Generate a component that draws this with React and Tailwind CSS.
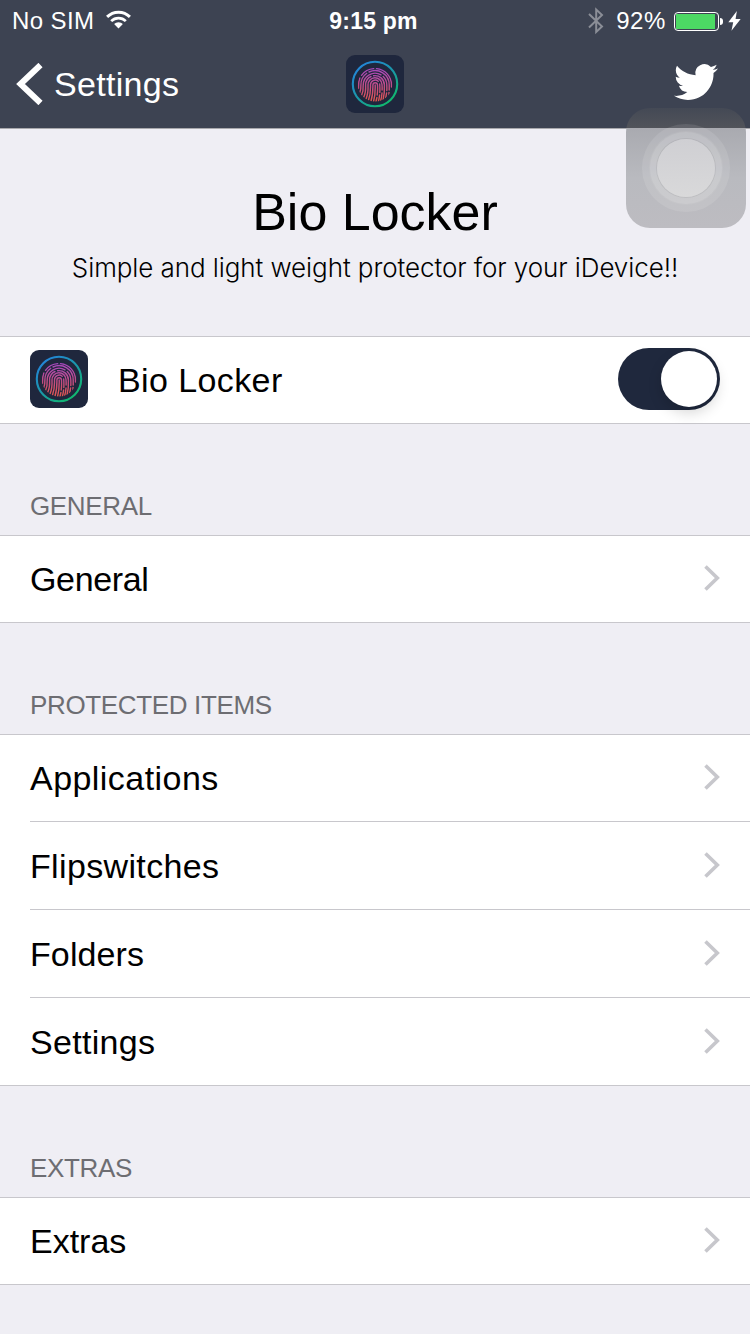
/**
 * App.jsx
 * Bio Locker preference pane: header, master switch and grouped links.
 */
import React, { useState } from 'react';

const GROUPS = [
  { title: 'General', items: [{ label: 'General', tracking: 'tracking-[-0.35px]' }] },
  {
    title: 'Protected Items',
    items: [
      { label: 'Applications', tracking: 'tracking-[0.45px]' },
      { label: 'Flipswitches', tracking: 'tracking-[0.35px]' },
      { label: 'Folders', tracking: 'tracking-[0.1px]' },
      { label: 'Settings', tracking: 'tracking-[0.3px]' },
    ],
  },
  { title: 'Extras', items: [{ label: 'Extras', tracking: 'tracking-normal' }] },
];

function FingerprintIcon({ id }) {
  return (
    <svg viewBox="0 0 58 58" className="w-[58px] h-[58px] shrink-0" fill="none">
      <defs>
        <linearGradient id={`${id}-ring`} x1="14" y1="10" x2="44" y2="48" gradientUnits="userSpaceOnUse">
          <stop offset="0" stopColor="#2386d8" />
          <stop offset="0.5" stopColor="#1a97a8" />
          <stop offset="1" stopColor="#10b96c" />
        </linearGradient>
        <linearGradient id={`${id}-print`} x1="29" y1="12" x2="29" y2="46" gradientUnits="userSpaceOnUse">
          <stop offset="0" stopColor="#a548c4" />
          <stop offset="0.5" stopColor="#bd4c8c" />
          <stop offset="1" stopColor="#e2564f" />
        </linearGradient>
        <clipPath id={`${id}-clip`}>
          <circle cx="29" cy="29.3" r="17.3" />
        </clipPath>
      </defs>
      <rect width="58" height="58" rx="9" fill="#1f273d" />
      <circle cx="29" cy="29" r="22.2" stroke={`url(#${id}-ring)`} strokeWidth="2.1" />
      <g stroke={`url(#${id}-print)`} strokeWidth="1.4" strokeLinecap="round" clipPath={`url(#${id}-clip)`}>
        <path d="M29.200 30c.2 6-.2 11-1.700 17" />
        <path d="M25 46c1.600-5 2-9.500 1.900-16a2.300 2.300 0 0 1 4.600 0c.2 4 .1 7-.3 10M30.900 42.500l-.9 4" />
        <path d="M22.500 45c1.800-5 2.200-9.500 2-15a4.700 4.700 0 0 1 7.700-3.800M33.700 29c.3 4 .3 6 .1 8.500M33.600 40c-.2 2-.6 4-1.200 6.500" />
        <path d="M20 44c1.900-4.500 2.300-8.500 2-14a7 7 0 0 1 14-.5c.2 2.500.2 4 .1 5.500M36 38c-.2 3-.6 5.500-1.400 8" />
        <path d="M17.600 42.500c1.900-4 2.300-7.500 2-12.500a9.300 9.300 0 0 1 5.400-8.500M27.600 20.700a9.400 9.400 0 0 1 10.800 9.300c.2 5 0 9.500-1.300 14.500" />
        <path d="M15.500 40.500c1.700-3.500 1.900-6.500 1.700-10.500A11.800 11.800 0 0 1 35 19.900M37.200 21.600a11.800 11.800 0 0 1 3.600 8.400c.1 2.500.1 4 0 5.500M40.600 38c-.3 2-.6 4-1.100 5.500" />
        <path d="M13.800 37.500c1.100-2.500 1.200-5 1.100-7.500A14.100 14.100 0 0 1 20.800 18.300M23 17a14.100 14.100 0 0 1 20.200 13v5" />
        <path d="M12.500 33.500c.1-3.500-.1-7 1.300-10.500M15.500 20.300A16.400 16.400 0 0 1 27.700 13.600M30.500 13.600a16.400 16.400 0 0 1 15 16.400v2M43 37.500v3" />
      </g>
    </svg>
  );
}

function WifiIcon() {
  return (
    <svg viewBox="0 0 25 19" className="w-[25px] h-[19px]" fill="none">
      <path d="M1.100 6.900a16.200 16.200 0 0 1 22.800 0" stroke="white" strokeWidth="3" />
      <path d="M5.200 11.100a10.400 10.400 0 0 1 14.600 0" stroke="white" strokeWidth="2.700" />
      <path d="M12.500 18.500 8.100 14.100a6.300 6.300 0 0 1 8.800 0z" fill="white" />
    </svg>
  );
}

function StatusBar() {
  return (
    <div className="grid grid-cols-3 h-10 pt-[2px] items-center text-[24px] leading-[38px] text-white">
      <div className="flex items-center pl-3">
        <span className="tracking-[0.4px]">No SIM</span>
        <span className="ml-[12px] -mt-[3px]"><WifiIcon /></span>
      </div>
      <div className="text-center text-[23px] font-bold tracking-[0.2px] pr-[3px]">9:15 pm</div>
      <div className="flex items-center justify-end pr-[9px]">
        <svg viewBox="0 0 16 28" className="w-4 h-7 mr-[12px]" fill="none" stroke="#8b8e97" strokeWidth="2">
          <path d="M1 7l13 12.500L8.200 25V2.500L14 8 1 20.500" />
        </svg>
        <span className="tracking-[0.6px]">92%</span>
        <span className="ml-[8px] w-[45px] h-[19px] rounded-[4px] border border-white p-px flex">
          <span className="w-[39px] h-full bg-[#4cd964]" />
        </span>
        <span className="ml-px w-[3px] h-[7px] rounded-r-full bg-white" />
        <svg viewBox="0 0 12 20" preserveAspectRatio="none" className="w-[13px] h-5 ml-[5px]" fill="white">
          <path d="M8.200 0 .3 11.200h4.500L3.200 19.800 11.700 8H7z" />
        </svg>
      </div>
    </div>
  );
}

function NavBar() {
  return (
    <div className="grid grid-cols-3 h-[88px] items-center text-white">
      <div className="flex items-center pl-4">
        <svg viewBox="0 0 27 42" className="w-[27px] h-[42px]" fill="none">
          <path d="M24.500 2 4.500 21l20 19" stroke="white" strokeWidth="6" />
        </svg>
        <span className="ml-[11px] text-[34px] leading-[40px] tracking-[0.3px]">Settings</span>
      </div>
      <div className="flex justify-center"><FingerprintIcon id="nav" /></div>
      <div className="flex justify-end pr-[32px] pb-[5px]">
        <svg viewBox="0 0 24 24" className="w-[44px] h-[44px]" fill="white">
          <path d="M23.953 4.570a10 10 0 0 1-2.825.775 4.958 4.958 0 0 0 2.163-2.723c-.951.555-2.005.959-3.127 1.184a4.920 4.920 0 0 0-8.384 4.482C7.690 8.095 4.067 6.130 1.640 3.162a4.822 4.822 0 0 0-.666 2.475c0 1.710.870 3.213 2.188 4.096a4.904 4.904 0 0 1-2.228-.616v.060a4.923 4.923 0 0 0 3.946 4.827 4.996 4.996 0 0 1-2.212.085 4.936 4.936 0 0 0 4.604 3.417 9.867 9.867 0 0 1-6.102 2.105c-.390 0-.779-.023-1.170-.067a13.995 13.995 0 0 0 7.557 2.209c9.053 0 13.998-7.496 13.998-13.985 0-.210 0-.420-.015-.630a9.935 9.935 0 0 0 2.460-2.548z" />
        </svg>
      </div>
    </div>
  );
}

function LinkRow({ label, tracking, last }) {
  return (
    <div className="pl-[30px] first:-mt-px last:-mb-px">
      <div className={`flex items-center justify-between h-[88px] pr-[30px] ${last ? 'pb-[2px]' : 'pb-px border-b border-[#c8c7cc]'}`}>
        <span className={`text-[34px] leading-[40px] pt-[2px] ${tracking}`}>{label}</span>
        <svg viewBox="0 0 16 26" className="w-4 h-[26px]" fill="none">
          <path d="M1.500 1.500 13.300 13l-11.800 11.500" stroke="#c7c7cc" strokeWidth="3.600" />
        </svg>
      </div>
    </div>
  );
}

function AssistiveTouch() {
  return (
    <div className="absolute left-[626px] top-[108px] w-[120px] h-[120px] rounded-[24px] overflow-hidden flex items-center justify-center">
      <div className="absolute inset-x-0 top-0 h-5 bg-linear-to-b from-[#444955] to-[#51535a]" />
      <div className="absolute inset-x-0 top-5 bottom-0 bg-linear-to-b from-[#a9aab0] via-[#b9babf] to-[#bdbcc1]" />
      <div className="relative w-[88px] h-[88px] rounded-full bg-white/10 flex items-center justify-center">
        <div className="w-[74px] h-[74px] rounded-full bg-white/15 border border-black/3 flex items-center justify-center">
          <div className="w-[58px] h-[58px] rounded-full bg-linear-to-b from-[#cfcfd3] to-[#d9d9da] ring-1 ring-black/6" />
        </div>
      </div>
    </div>
  );
}

export default function App() {
  const [enabled, setEnabled] = useState(true);

  return (
    <div className="relative w-[750px] h-[1334px] overflow-hidden bg-[#efeef4] text-black font-['Liberation_Sans',Arial,sans-serif]">
      <header className="bg-[#3d4352] border-b border-[#a9a9ad] h-[129px]">
        <StatusBar />
        <NavBar />
      </header>

      <div className="h-[207px] pt-[53px] text-center">
        <h1 className="text-[52px] leading-[60px]">Bio Locker</h1>
        <p className="mt-[8px] text-[26px] leading-[36px] font-light tracking-[-0.08px] font-['Inter','Liberation_Sans',sans-serif]">
          Simple and light weight protector for your iDevice!!
        </p>
      </div>

      <div className="flex items-center h-[88px] px-[30px] pb-[2px] bg-white border-y border-[#c8c7cc]">
        <FingerprintIcon id="row" />
        <span className="ml-[30px] pt-[2px] flex-1 text-[34px] leading-[40px] tracking-[0.4px]">Bio Locker</span>
        <button
          role="switch"
          aria-checked={enabled}
          aria-label="Bio Locker"
          onClick={() => setEnabled(!enabled)}
          className={`flex items-center w-[102px] h-[62px] p-[3px] rounded-full ${enabled ? 'bg-[#1f283d] justify-end' : 'bg-gray-300 justify-start'}`}
        >
          <span className="w-[56px] h-[56px] rounded-full bg-white shadow-[0_6px_14px_rgba(0,0,0,0.16)]" />
        </button>
      </div>

      {GROUPS.map((group) => (
        <section key={group.title}>
          <h2 className="h-[111px] pl-[30px] pt-[67px] text-[26px] leading-[30px] tracking-[-0.35px] uppercase text-[#6d6d72]">
            {group.title}
          </h2>
          <div className="bg-white border-y border-[#c8c7cc]">
            {group.items.map((item, i) => (
              <LinkRow
                key={item.label}
                label={item.label}
                tracking={item.tracking}
                last={i === group.items.length - 1}
              />
            ))}
          </div>
        </section>
      ))}

      <AssistiveTouch />
    </div>
  );
}
